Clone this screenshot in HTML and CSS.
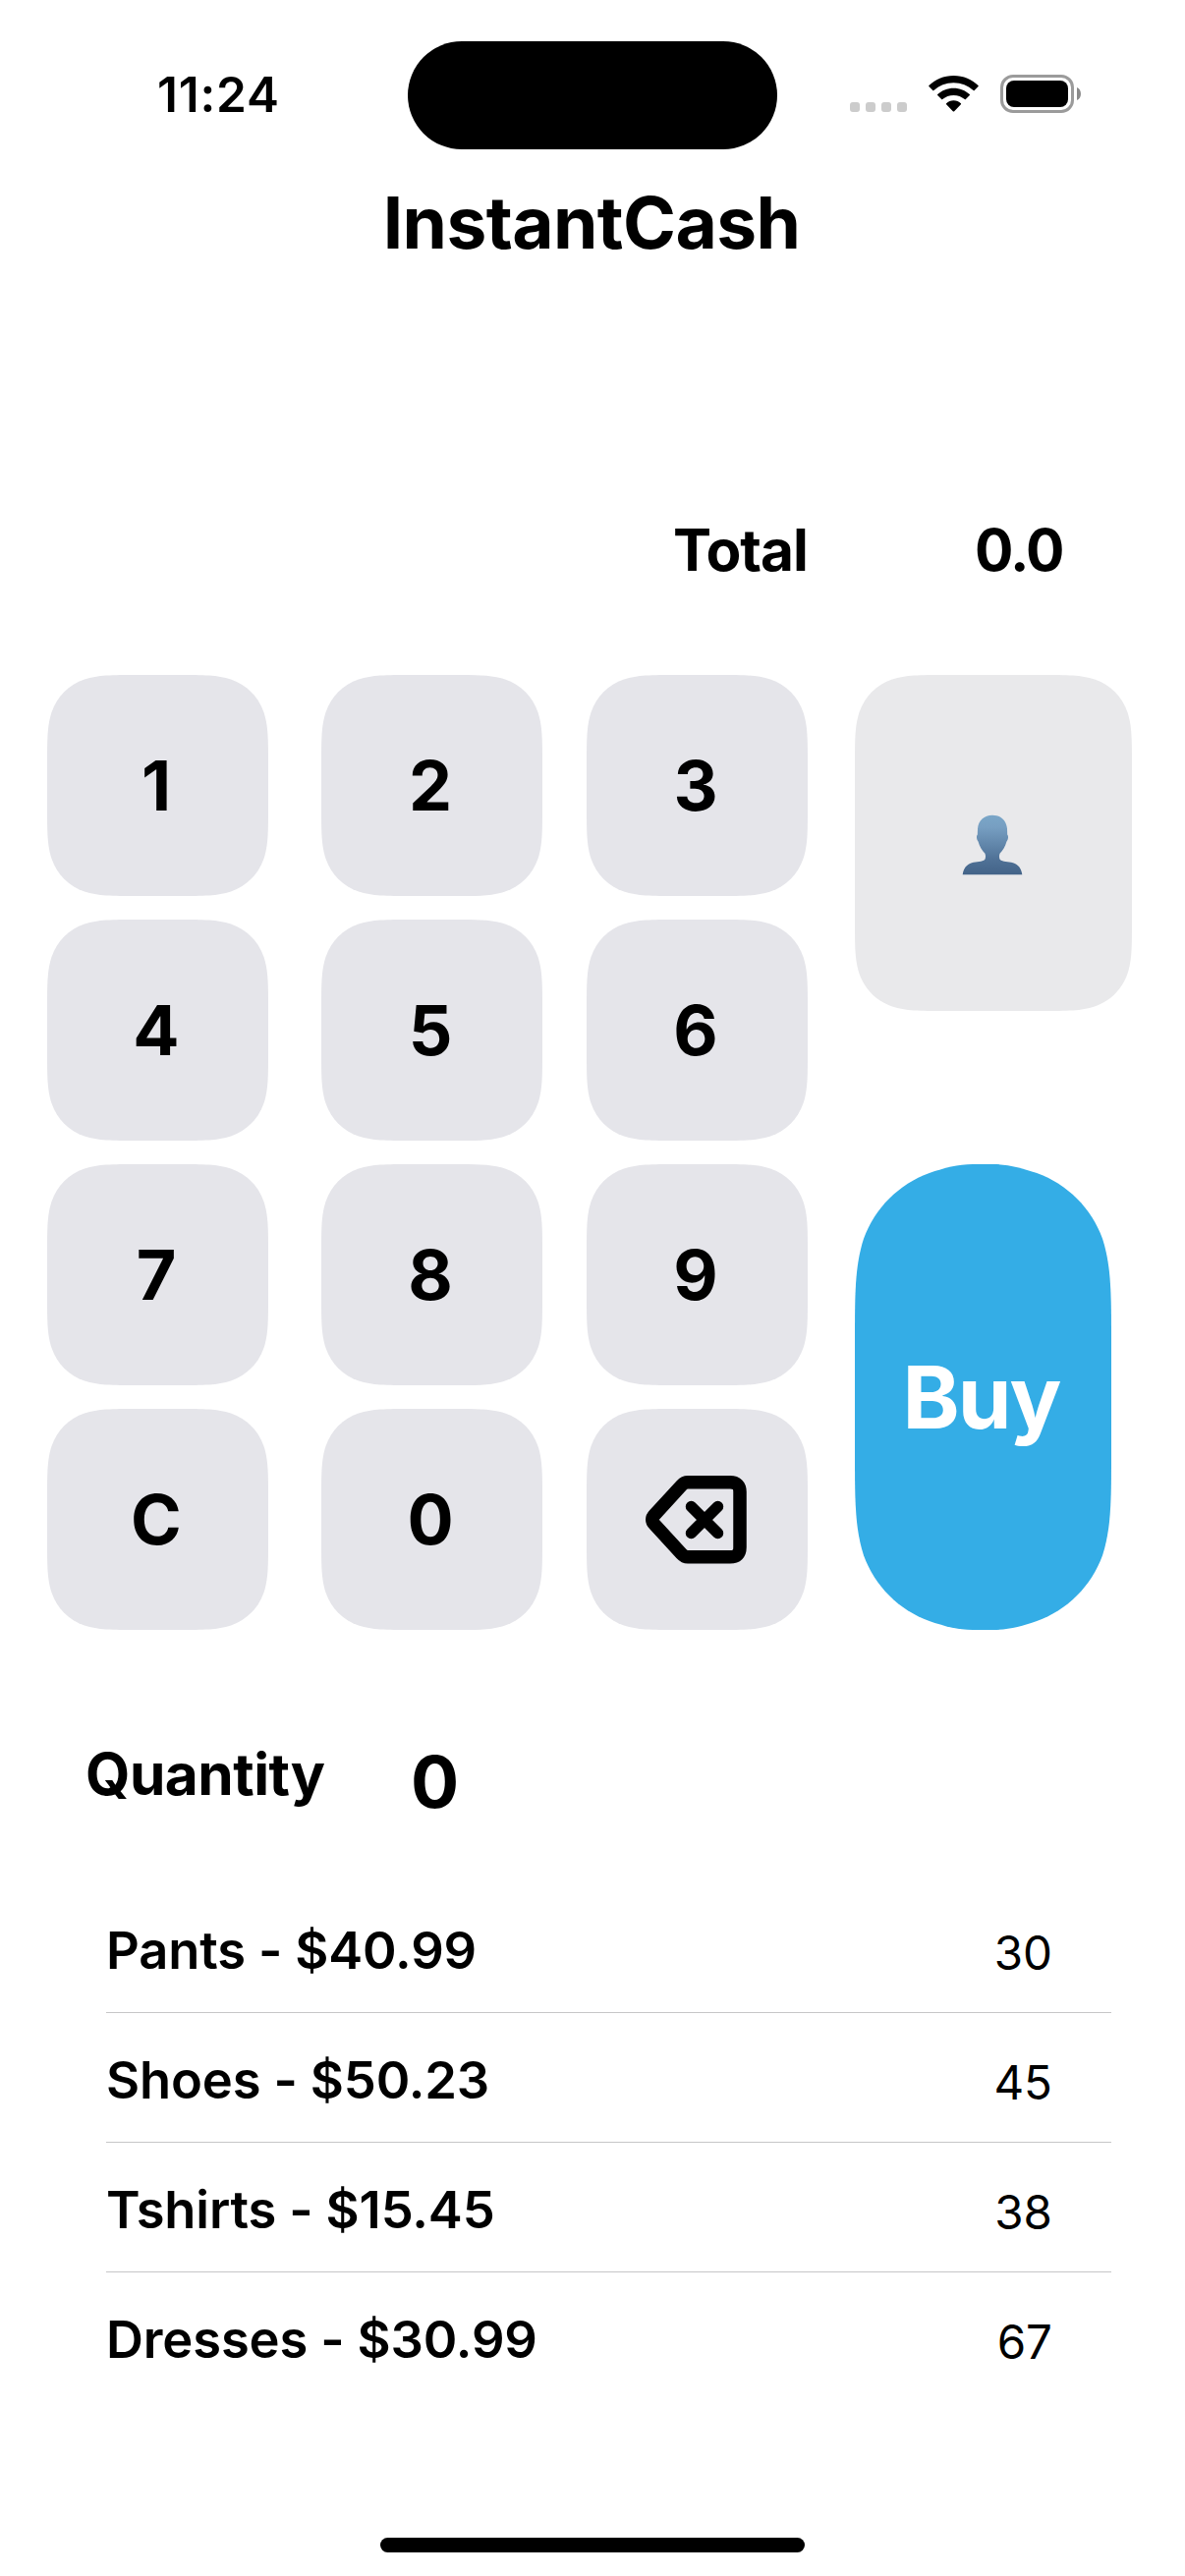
FILE: index.html
```html
<!DOCTYPE html>
<html lang="en">
<head>
<meta charset="utf-8">
<title>InstantCash</title>
<link rel="stylesheet" href="styles.css">
</head>
<body>
<div class="screen">
  <header class="status">
    <span class="clock">11:24</span>
    <span class="island"></span>
    <span class="indicators">
      <span class="signal"><i></i><i></i><i></i><i></i></span>
      <svg class="wifi" width="51" height="37" viewBox="0 0 51 37">
        <path d="M25.500 0C35.500 0 44.500 3.900 50.600 10.100Q51 10.600 50.600 11.100L46.700 15.100Q46.200 15.600 45.700 15.100C40.300 10.200 33.200 7.200 25.500 7.200S10.700 10.200 5.300 15.100Q4.800 15.600 4.300 15.100L.4 11.100Q0 10.600 .4 10.100C6.500 3.900 15.500 0 25.500 0Z"/>
        <path d="M25.500 12.700C31.800 12.700 37.500 15.100 41.800 19.100Q42.300 19.600 41.800 20.100L37.800 24.100Q37.300 24.600 36.800 24.100C33.800 21.400 29.800 19.900 25.500 19.900S17.200 21.400 14.200 24.100Q13.700 24.600 13.200 24.100L9.200 20.100Q8.700 19.600 9.200 19.100C13.500 15.100 19.200 12.700 25.500 12.700Z"/>
        <path d="M25.500 25.200C28.400 25.200 31 26.300 32.900 28.200Q33.400 28.700 32.900 29.200L26.200 36.200Q25.500 36.900 24.800 36.200L18.100 29.200Q17.600 28.700 18.100 28.200C20 26.300 22.600 25.200 25.500 25.200Z"/>
      </svg>
      <svg class="battery" width="82" height="39" viewBox="0 0 82 39">
        <rect x="1.500" y="1.500" width="72" height="36" rx="11.500" fill="none" stroke="#9b9b9b" stroke-width="3"/>
        <rect x="6" y="6" width="63" height="27" rx="8"/>
        <path d="M78 13C83.300 15 83.300 24 78 26Z" fill="#8a8a8a"/>
      </svg>
    </span>
  </header>

  <h1 class="title">InstantCash</h1>

  <div class="total">
    <span class="total-label">Total</span>
    <span class="total-value">0.0</span>
  </div>

  <main class="pad">
    <div class="keys">
      <button class="key">1</button><button class="key">2</button><button class="key">3</button>
      <button class="key">4</button><button class="key">5</button><button class="key">6</button>
      <button class="key">7</button><button class="key">8</button><button class="key">9</button>
      <button class="key">C</button><button class="key">0</button>
      <button class="key" aria-label="Delete">
        <svg width="103" height="90" viewBox="0 0 103 90" fill="none" stroke="#000" stroke-linecap="round" stroke-linejoin="round">
          <path stroke-width="13.500" d="M43 6.800H86Q96 6.800 96 16.500V73Q96 82.800 86 82.800H43Q39.500 82.800 36.500 79.500L9 49.500Q4.500 44.700 9 40L36.500 10Q39.500 6.800 43 6.800Z"/>
          <path stroke-width="11.500" d="M46.500 31.500L73.500 58.500M73.500 31.500L46.500 58.500"/>
        </svg>
      </button>
    </div>
    <div class="actions">
      <button class="customer" aria-label="Customer">
        <svg width="62" height="62" viewBox="0 0 62 62">
          <defs><linearGradient id="bust" x1="0" y1="0" x2="0" y2="1"><stop offset="0" stop-color="#7aa6c8"/><stop offset=".2" stop-color="#779fc2"/><stop offset=".75" stop-color="#4f7196"/><stop offset="1" stop-color="#436388"/></linearGradient></defs>
          <path fill="url(#bust)" d="M31 .7C39.500 .7 45.300 6 46 14.500L46.200 20.500C47.600 21.800 47.100 25.500 45.500 27.500C44 33 41.500 36.500 38.700 39.500C37.700 41.500 37.800 44 38.600 45.700C41.500 48.500 47 47.600 52 49.200C57.500 51 60.500 55 61.300 61.300H.7C1.500 55 4.500 51 10 49.200C15 47.600 20.500 48.500 23.400 45.700C24.200 44 24.300 41.500 23.300 39.500C20.500 36.500 18 33 16.500 27.500C14.900 25.500 14.400 21.800 15.800 20.500L16 14.500C16.700 6 22.500 .7 31 .7Z"/>
        </svg>
      </button>
      <button class="buy">Buy</button>
    </div>
  </main>

  <div class="quantity">
    <span class="quantity-label">Quantity</span>
    <span class="quantity-value">0</span>
  </div>

  <ul class="items">
    <li><span class="name">Pants - $40.99</span><span class="stock">30</span></li>
    <li><span class="name">Shoes - $50.23</span><span class="stock">45</span></li>
    <li><span class="name">Tshirts - $15.45</span><span class="stock">38</span></li>
    <li><span class="name">Dresses - $30.99</span><span class="stock">67</span></li>
  </ul>

  <div class="home"></div>
</div>
</body>
</html>
```
FILE: styles.css
```css
* { box-sizing: border-box; }
body { margin: 0; background: #fff; color: #000; font-family: Inter, "Liberation Sans", sans-serif; }
button { border: 0; padding: 0; margin: 0; font: inherit; color: inherit; }
svg { display: block; }

.screen { width: 1206px; height: 2622px; display: flex; flex-direction: column; overflow: hidden; background: #fff; }

.status { height: 152px; padding: 41px 106px 0 160px; display: flex; align-items: flex-start; }
.clock { width: 255px; padding-top: 25px; font-size: 49.5px; line-height: 60px; font-weight: 600; letter-spacing: 0.8px; }
.island { width: 376px; height: 110px; margin-top: 1px; border-radius: 55px; background: #000; }
.indicators { display: flex; align-items: flex-start; margin-left: 74px; padding-top: 35px; }
.signal { display: flex; gap: 6px; padding-top: 28px; }
.signal i { width: 10px; height: 10px; border-radius: 3px; background: #ccc; }
.wifi { margin: 1px 22px 0; }

.title { margin: 31px 0 0; padding-right: 2px; text-align: center; font-size: 73px; line-height: 88px; font-weight: 700; letter-spacing: -0.6px; }

.total { margin-top: 254px; display: flex; font-size: 58.5px; line-height: 70px; font-weight: 700; padding-left: 685px; }
.total-label { width: 307px; letter-spacing: -1px; }
.total-value { letter-spacing: -1.8px; }

.pad { margin-top: 92px; padding-left: 48px; display: flex; gap: 48px; }
.keys { display: grid; grid-template-columns: 279px 270px 225px; grid-template-rows: repeat(4, 225px); row-gap: 24px; }

/* Continuous-curvature corners, radius 60 on the keys and 120 on the buy button */
.key {
  width: 225px; height: 225px; padding-right: 3px; background: #e5e5ea; font-size: 70px; font-weight: 700;
  display: flex; align-items: center; justify-content: center;
  clip-path: path("M92 0H133C160 0 173 0 187 4.500C203 10 215 22 220.500 38C225 52 225 65 225 92V133C225 160 225 173 220.500 187C215 203 203 215 187 220.500C173 225 160 225 133 225H92C65 225 52 225 38 220.500C22 215 10 203 4.500 187C0 173 0 160 0 133V92C0 65 0 52 4.500 38C10 22 22 10 38 4.500C52 0 65 0 92 0Z");
}
.actions { display: flex; flex-direction: column; gap: 156px; }
.customer {
  width: 282px; height: 342px; padding: 4px 2px 0 0; background: #e9e9eb;
  display: flex; align-items: center; justify-content: center;
  clip-path: path("M92 0H190C217 0 230 0 244 4.500C260 10 272 22 277.500 38C282 52 282 65 282 92V250C282 277 282 290 277.500 304C272 320 260 332 244 337.500C230 342 217 342 190 342H92C65 342 52 342 38 337.500C22 332 10 320 4.500 304C0 290 0 277 0 250V92C0 65 0 52 4.500 38C10 22 22 10 38 4.500C52 0 65 0 92 0Z");
}
.buy {
  width: 261px; height: 474px; padding-right: 4px; background: #34ade6; color: #fff; font-size: 88px; font-weight: 700; letter-spacing: -2px;
  clip-path: path("M120 0H141C156 0 170 3.800 185.200 9C216.300 20.300 240.700 44.700 252 75.800C261 104 261 131 261 183V291C261 343 261 370 252 398.200C240.700 429.300 216.300 453.700 185.200 465C170 470.200 156 474 141 474H120C105 474 91 470.200 75.800 465C44.700 453.700 20.300 429.300 9 398.200C0 370 0 343 0 291V183C0 131 0 104 9 75.800C20.300 44.700 44.700 20.300 75.800 9C91 3.800 105 0 120 0Z");
}

.quantity { margin-top: 111px; padding-left: 87px; display: flex; font-weight: 700; }
.quantity-label { width: 331px; font-size: 58.5px; line-height: 72px; letter-spacing: -0.5px; }
.quantity-value { font-size: 73px; line-height: 88px; }

.items { list-style: none; margin: 59px 75px 0 108px; padding: 0; }
.items li { height: 132px; display: flex; justify-content: space-between; align-items: center; padding-right: 60px; border-bottom: 1px solid #c6c6c8; }
.items li:last-child { border-bottom: 0; }
.name { padding-top: 4px; font-size: 52.5px; font-weight: 600; letter-spacing: -0.15px; }
.stock { padding-top: 9px; font-size: 47.5px; }

.home { width: 432px; height: 15px; border-radius: 8px; background: #000; margin: 138px auto 0; }
```
